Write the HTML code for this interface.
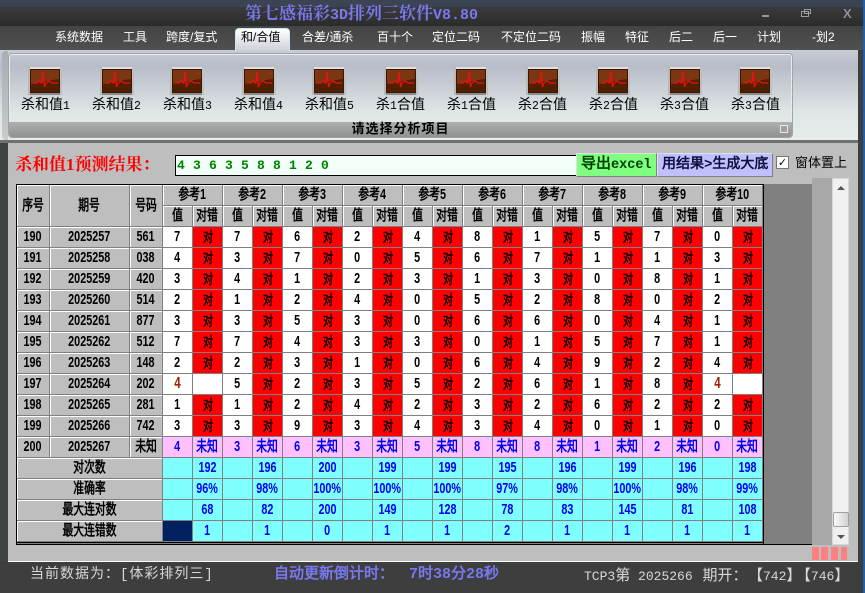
<!DOCTYPE html>
<html><head><meta charset="utf-8">
<style>
*{margin:0;padding:0;box-sizing:border-box}
html,body{width:865px;height:593px;overflow:hidden;background:#bebebe}
body{position:relative;font-family:"Liberation Sans","WenQuanYi Zen Hei","Noto Sans CJK SC",sans-serif}
.a{position:absolute}
.m{position:absolute;top:29px;height:16px;line-height:16px;font-size:12px;color:#fff;white-space:nowrap}
.ic{position:absolute;top:67px;width:34px;height:28px}
.l{position:absolute;top:95px;width:71px;text-align:center;font-size:14px;line-height:18px;color:#000;white-space:nowrap}
.l i{font:normal 11.5px "Liberation Mono",monospace}
table{border-collapse:separate;border-spacing:0;table-layout:fixed;width:746px}
td{height:21px;padding:0;text-align:center;vertical-align:middle;border-right:1px solid #808080;border-bottom:1px solid #808080;font:bold 15px/18px "Liberation Sans","WenQuanYi Zen Hei",sans-serif;color:#000;background:#fff;overflow:hidden;white-space:nowrap}
td b{display:inline-block;margin:0 -20px;transform:scaleX(.72)}
td.g{background:#bebebe;box-shadow:inset 1px 1px 0 #fff}
tr.d td:nth-child(odd):not(.g):not(.w){background:#f00;font-size:14px}
tr.p td{background:#ffc0ff;color:#0000f0}
tr.p td.g{background:#bebebe;color:#000}
tr.s td{background:#80ffff;color:#0000f0}
tr.s td.g{background:#bebebe;color:#000}
tr.s td.n{background:#002060}
td.r{color:#a02000;font-size:16px}
.c{font-size:15px;font-family:"WenQuanYi Zen Hei","Noto Sans CJK SC",sans-serif}
</style></head><body>
<svg width="0" height="0" style="position:absolute"><defs>
<symbol id="h" viewBox="0 0 34 28">
<rect width="34" height="28" fill="#8c8c8c"/><rect x="0" y="0" width="34" height="2" fill="#e0e0e0"/><rect x="0" y="0" width="2" height="28" fill="#b8b8b8"/><rect x="32" y="0" width="2" height="28" fill="#c0c0c0"/>
<rect x="2" y="2" width="30" height="24" fill="#3a1808"/><path d="M3 3H31V12L3 17Z" fill="#7c3612"/><path d="M3 17L31 12V25H3Z" fill="#511f02"/>
<path d="M5 16H9L12 14 13 16H14L15 5 16.5 20 18 16 21 14 24 16H30" fill="none" stroke="#ee1010" stroke-width="1.2"/>
</symbol></defs></svg>

<div class="a" style="left:0;top:0;width:865px;height:7px;background:#3b4452"></div>
<div class="a" style="left:0;top:7px;width:865px;height:19px;background:linear-gradient(#3a3a3a,#2c2c2c)"></div>
<div class="a" style="left:0;top:26px;width:865px;height:25px;background:linear-gradient(#444,#505050)"></div>
<div class="a" style="left:245px;top:6px;height:20px;line-height:20px;font-size:17px;font-weight:bold;color:#7878f0;font-family:'Liberation Mono','Noto Serif CJK SC',serif;white-space:nowrap">第七感福彩<span style="font-size:15px">3D</span>排列三软件<span style="font-size:15px">V8.80</span></div>
<div class="a" style="left:762px;top:15px;width:7px;height:2px;background:#9a9a9a"></div>
<div class="a" style="left:801px;top:11px;width:8px;height:6px;border:1px solid #9aa0a8"></div>
<div class="a" style="left:804px;top:9px;width:7px;height:5px;border:1px solid #9aa0a8"></div>
<div class="a" style="left:843px;top:5px;font:bold 13px/18px 'Liberation Sans',sans-serif;color:#8a929a">X</div>

<div class="a" style="left:0;top:50px;width:865px;height:90px;background:linear-gradient(#c8ccd6,#b8bcc8 18%,#e0e6e6 70%,#e6ecec)"></div>
<div class="a" style="left:235px;top:28px;width:55px;height:23px;background:linear-gradient(#fff,#ccd0d8);border-radius:4px 4px 0 0;border:1px solid #c8e8f0;border-bottom:0"></div>
<span class="m" style="left:55px">系统数据</span><span class="m" style="left:123px">工具</span><span class="m" style="left:166px">跨度/复式</span><span class="m" style="left:241px;color:#000">和/合值</span><span class="m" style="left:302px">合差/通杀</span><span class="m" style="left:377px">百十个</span><span class="m" style="left:432px">定位二码</span><span class="m" style="left:501px">不定位二码</span><span class="m" style="left:581px">振幅</span><span class="m" style="left:625px">特征</span><span class="m" style="left:669px">后二</span><span class="m" style="left:713px">后一</span><span class="m" style="left:757px">计划</span><span class="m" style="left:812px">-划2</span>

<div class="a" style="left:2px;top:51px;width:6px;height:89px;background:linear-gradient(#a8acb4,#c8cccc);border-radius:4px 0 0 4px"></div>
<div class="a" style="left:8px;top:53px;width:785px;height:85px;border:1px solid #a0a4a8;border-radius:4px;box-shadow:inset 0 0 0 1px #e8ecee"></div>
<div class="a" style="left:9px;top:122px;width:783px;height:15px;background:linear-gradient(#aeb0b0,#909292);border-radius:0 0 3px 3px"></div>
<div class="a" style="left:9px;top:119px;width:783px;text-align:center;font:bold 13px/17px 'WenQuanYi Zen Hei','Noto Sans CJK SC',sans-serif;color:#000;letter-spacing:1px;white-space:nowrap">请选择分析项目</div>
<div class="a" style="left:780px;top:125px;width:8px;height:8px;border:1px solid #e8e8e8;background:#a0a0a0"></div>

<svg class="ic" style="left:28px"><use href="#h"/></svg><svg class="ic" style="left:100px"><use href="#h"/></svg><svg class="ic" style="left:170px"><use href="#h"/></svg><svg class="ic" style="left:242px"><use href="#h"/></svg><svg class="ic" style="left:312px"><use href="#h"/></svg><svg class="ic" style="left:384px"><use href="#h"/></svg><svg class="ic" style="left:454px"><use href="#h"/></svg><svg class="ic" style="left:526px"><use href="#h"/></svg><svg class="ic" style="left:596px"><use href="#h"/></svg><svg class="ic" style="left:668px"><use href="#h"/></svg><svg class="ic" style="left:738px"><use href="#h"/></svg>
<span class="l" style="left:10px">杀和值<i>1</i></span><span class="l" style="left:81px">杀和值<i>2</i></span><span class="l" style="left:152px">杀和值<i>3</i></span><span class="l" style="left:223px">杀和值<i>4</i></span><span class="l" style="left:294px">杀和值<i>5</i></span><span class="l" style="left:365px">杀<i>1</i>合值</span><span class="l" style="left:436px">杀<i>1</i>合值</span><span class="l" style="left:507px">杀<i>2</i>合值</span><span class="l" style="left:578px">杀<i>2</i>合值</span><span class="l" style="left:649px">杀<i>3</i>合值</span><span class="l" style="left:720px">杀<i>3</i>合值</span>

<div class="a" style="left:0;top:140px;width:860px;height:3px;background:#707070"></div>
<div class="a" style="left:0;top:143px;width:8px;height:418px;background:#3c4444"></div>
<div class="a" style="left:8px;top:143px;width:850px;height:418px;background:#bebebe"></div>
<div class="a" style="left:858px;top:50px;width:5px;height:543px;background:#3e3e3e"></div>
<div class="a" style="left:863px;top:0;width:2px;height:593px;background:#1c60b0"></div>

<div class="a" style="left:15px;top:154px;font:bold 17px/22px 'Liberation Serif','Noto Serif CJK SC',serif;color:#f00;white-space:nowrap">杀和值1预测结果：</div>
<div class="a" style="left:175px;top:155px;width:402px;height:21px;border:1px solid #000;background:#f2fff8;font:bold 13px/19px 'Liberation Mono',monospace;color:#008000;padding-left:1px;word-spacing:.4px">4 3 6 3 5 8 8 1 2 0</div>
<div class="a" style="left:576px;top:153px;width:81px;height:24px;background:#80ff80;border:1px solid #e0e0e0;border-right-color:#808080;border-bottom-color:#808080;font:bold 15px/22px 'Liberation Mono','WenQuanYi Zen Hei',monospace;color:#004000;white-space:nowrap;padding-left:4px">导出<span style="font-size:13.5px">excel</span></div>
<div class="a" style="left:657px;top:153px;width:116px;height:24px;background:#c0c0ff;border:1px solid #e0e0e0;border-right-color:#808080;border-bottom-color:#808080;font:bold 14px/22px 'Liberation Mono','WenQuanYi Zen Hei',monospace;color:#101040;white-space:nowrap;padding-left:4px">用结果&gt;生成大底</div>
<div class="a" style="left:776px;top:156px;width:13px;height:13px;background:#fff;border:1px solid #777;font:bold 11px/11px 'DejaVu Sans',sans-serif;color:#000;text-align:center">✓</div>
<div class="a" style="left:795px;top:155px;font-size:13px;line-height:16px;color:#000;white-space:nowrap">窗体置上</div>

<div class="a" style="left:763px;top:184px;width:50px;height:361px;background:#808080"></div>
<div class="a" style="left:812px;top:178px;width:20px;height:367px;background:#a8a8a8"></div>
<div class="a" style="left:832px;top:178px;width:17px;height:367px;background:#f0f0f0;border:1px solid #d8d8d8"></div>
<div class="a" style="left:837px;top:186px;width:0;height:0;border:4px solid transparent;border-bottom:4px solid #555;border-top:0"></div>
<div class="a" style="left:837px;top:535px;width:0;height:0;border:4px solid transparent;border-top:4px solid #555;border-bottom:0"></div>
<div class="a" style="left:833px;top:512px;width:16px;height:15px;background:linear-gradient(90deg,#fafafa,#d0d0d0);border:1px solid #a0a0a0;border-radius:2px"></div>
<div class="a" style="left:812px;top:547px;width:7px;height:13px;background:#ff8080"></div><div class="a" style="left:821px;top:547px;width:7px;height:13px;background:#ff8080"></div><div class="a" style="left:831px;top:547px;width:7px;height:13px;background:#ff8080"></div><div class="a" style="left:841px;top:547px;width:6px;height:13px;background:#ff8080"></div>

<div class="a" style="left:16px;top:184px;width:748px;height:361px;border:1px solid #000;border-bottom:0;background:#808080"></div>
<div class="a" style="left:16px;top:542px;width:748px;height:1px;background:#000"></div>
<div class="a" style="left:16px;top:544px;width:796px;height:1px;background:#000"></div>
<div class="a" style="left:17px;top:185px">
<table>
<colgroup><col style="width:33px"><col style="width:80px"><col style="width:33px"><col span="20" style="width:30px"></colgroup>
<tr><td class="g" rowspan="2"><b>序号</b></td><td class="g" rowspan="2"><b>期号</b></td><td class="g" rowspan="2"><b>号码</b></td><td class="g" colspan="2"><b>参考1</b></td><td class="g" colspan="2"><b>参考2</b></td><td class="g" colspan="2"><b>参考3</b></td><td class="g" colspan="2"><b>参考4</b></td><td class="g" colspan="2"><b>参考5</b></td><td class="g" colspan="2"><b>参考6</b></td><td class="g" colspan="2"><b>参考7</b></td><td class="g" colspan="2"><b>参考8</b></td><td class="g" colspan="2"><b>参考9</b></td><td class="g" colspan="2"><b>参考10</b></td></tr>
<tr><td class="g"><b>值</b></td><td class="g"><b>对错</b></td><td class="g"><b>值</b></td><td class="g"><b>对错</b></td><td class="g"><b>值</b></td><td class="g"><b>对错</b></td><td class="g"><b>值</b></td><td class="g"><b>对错</b></td><td class="g"><b>值</b></td><td class="g"><b>对错</b></td><td class="g"><b>值</b></td><td class="g"><b>对错</b></td><td class="g"><b>值</b></td><td class="g"><b>对错</b></td><td class="g"><b>值</b></td><td class="g"><b>对错</b></td><td class="g"><b>值</b></td><td class="g"><b>对错</b></td><td class="g"><b>值</b></td><td class="g"><b>对错</b></td></tr>
<tr class="d"><td class="g"><b>190</b></td><td class="g"><b>2025257</b></td><td class="g"><b>561</b></td><td><b>7</b></td><td><b>对</b></td><td><b>7</b></td><td><b>对</b></td><td><b>6</b></td><td><b>对</b></td><td><b>2</b></td><td><b>对</b></td><td><b>4</b></td><td><b>对</b></td><td><b>8</b></td><td><b>对</b></td><td><b>1</b></td><td><b>对</b></td><td><b>5</b></td><td><b>对</b></td><td><b>7</b></td><td><b>对</b></td><td><b>0</b></td><td><b>对</b></td></tr>
<tr class="d"><td class="g"><b>191</b></td><td class="g"><b>2025258</b></td><td class="g"><b>038</b></td><td><b>4</b></td><td><b>对</b></td><td><b>3</b></td><td><b>对</b></td><td><b>7</b></td><td><b>对</b></td><td><b>0</b></td><td><b>对</b></td><td><b>5</b></td><td><b>对</b></td><td><b>6</b></td><td><b>对</b></td><td><b>7</b></td><td><b>对</b></td><td><b>1</b></td><td><b>对</b></td><td><b>1</b></td><td><b>对</b></td><td><b>3</b></td><td><b>对</b></td></tr>
<tr class="d"><td class="g"><b>192</b></td><td class="g"><b>2025259</b></td><td class="g"><b>420</b></td><td><b>3</b></td><td><b>对</b></td><td><b>4</b></td><td><b>对</b></td><td><b>1</b></td><td><b>对</b></td><td><b>2</b></td><td><b>对</b></td><td><b>3</b></td><td><b>对</b></td><td><b>1</b></td><td><b>对</b></td><td><b>3</b></td><td><b>对</b></td><td><b>0</b></td><td><b>对</b></td><td><b>8</b></td><td><b>对</b></td><td><b>1</b></td><td><b>对</b></td></tr>
<tr class="d"><td class="g"><b>193</b></td><td class="g"><b>2025260</b></td><td class="g"><b>514</b></td><td><b>2</b></td><td><b>对</b></td><td><b>1</b></td><td><b>对</b></td><td><b>2</b></td><td><b>对</b></td><td><b>4</b></td><td><b>对</b></td><td><b>0</b></td><td><b>对</b></td><td><b>5</b></td><td><b>对</b></td><td><b>2</b></td><td><b>对</b></td><td><b>8</b></td><td><b>对</b></td><td><b>0</b></td><td><b>对</b></td><td><b>2</b></td><td><b>对</b></td></tr>
<tr class="d"><td class="g"><b>194</b></td><td class="g"><b>2025261</b></td><td class="g"><b>877</b></td><td><b>3</b></td><td><b>对</b></td><td><b>3</b></td><td><b>对</b></td><td><b>5</b></td><td><b>对</b></td><td><b>3</b></td><td><b>对</b></td><td><b>0</b></td><td><b>对</b></td><td><b>6</b></td><td><b>对</b></td><td><b>6</b></td><td><b>对</b></td><td><b>0</b></td><td><b>对</b></td><td><b>4</b></td><td><b>对</b></td><td><b>1</b></td><td><b>对</b></td></tr>
<tr class="d"><td class="g"><b>195</b></td><td class="g"><b>2025262</b></td><td class="g"><b>512</b></td><td><b>7</b></td><td><b>对</b></td><td><b>7</b></td><td><b>对</b></td><td><b>4</b></td><td><b>对</b></td><td><b>3</b></td><td><b>对</b></td><td><b>3</b></td><td><b>对</b></td><td><b>0</b></td><td><b>对</b></td><td><b>1</b></td><td><b>对</b></td><td><b>5</b></td><td><b>对</b></td><td><b>7</b></td><td><b>对</b></td><td><b>1</b></td><td><b>对</b></td></tr>
<tr class="d"><td class="g"><b>196</b></td><td class="g"><b>2025263</b></td><td class="g"><b>148</b></td><td><b>2</b></td><td><b>对</b></td><td><b>2</b></td><td><b>对</b></td><td><b>3</b></td><td><b>对</b></td><td><b>1</b></td><td><b>对</b></td><td><b>0</b></td><td><b>对</b></td><td><b>6</b></td><td><b>对</b></td><td><b>4</b></td><td><b>对</b></td><td><b>9</b></td><td><b>对</b></td><td><b>2</b></td><td><b>对</b></td><td><b>4</b></td><td><b>对</b></td></tr>
<tr class="d"><td class="g"><b>197</b></td><td class="g"><b>2025264</b></td><td class="g"><b>202</b></td><td class="r"><b>4</b></td><td class="w"></td><td><b>5</b></td><td><b>对</b></td><td><b>2</b></td><td><b>对</b></td><td><b>3</b></td><td><b>对</b></td><td><b>5</b></td><td><b>对</b></td><td><b>2</b></td><td><b>对</b></td><td><b>6</b></td><td><b>对</b></td><td><b>1</b></td><td><b>对</b></td><td><b>8</b></td><td><b>对</b></td><td class="r"><b>4</b></td><td class="w"></td></tr>
<tr class="d"><td class="g"><b>198</b></td><td class="g"><b>2025265</b></td><td class="g"><b>281</b></td><td><b>1</b></td><td><b>对</b></td><td><b>1</b></td><td><b>对</b></td><td><b>2</b></td><td><b>对</b></td><td><b>4</b></td><td><b>对</b></td><td><b>2</b></td><td><b>对</b></td><td><b>3</b></td><td><b>对</b></td><td><b>2</b></td><td><b>对</b></td><td><b>6</b></td><td><b>对</b></td><td><b>2</b></td><td><b>对</b></td><td><b>2</b></td><td><b>对</b></td></tr>
<tr class="d"><td class="g"><b>199</b></td><td class="g"><b>2025266</b></td><td class="g"><b>742</b></td><td><b>3</b></td><td><b>对</b></td><td><b>3</b></td><td><b>对</b></td><td><b>9</b></td><td><b>对</b></td><td><b>3</b></td><td><b>对</b></td><td><b>4</b></td><td><b>对</b></td><td><b>3</b></td><td><b>对</b></td><td><b>4</b></td><td><b>对</b></td><td><b>0</b></td><td><b>对</b></td><td><b>1</b></td><td><b>对</b></td><td><b>0</b></td><td><b>对</b></td></tr>
<tr class="p"><td class="g"><b>200</b></td><td class="g"><b>2025267</b></td><td class="g"><b>未知</b></td><td><b>4</b></td><td><b>未知</b></td><td><b>3</b></td><td><b>未知</b></td><td><b>6</b></td><td><b>未知</b></td><td><b>3</b></td><td><b>未知</b></td><td><b>5</b></td><td><b>未知</b></td><td><b>8</b></td><td><b>未知</b></td><td><b>8</b></td><td><b>未知</b></td><td><b>1</b></td><td><b>未知</b></td><td><b>2</b></td><td><b>未知</b></td><td><b>0</b></td><td><b>未知</b></td></tr>
<tr class="s"><td class="g" colspan="3"><b>对次数</b></td><td></td><td><b>192</b></td><td></td><td><b>196</b></td><td></td><td><b>200</b></td><td></td><td><b>199</b></td><td></td><td><b>199</b></td><td></td><td><b>195</b></td><td></td><td><b>196</b></td><td></td><td><b>199</b></td><td></td><td><b>196</b></td><td></td><td><b>198</b></td></tr>
<tr class="s"><td class="g" colspan="3"><b>准确率</b></td><td></td><td><b>96%</b></td><td></td><td><b>98%</b></td><td></td><td><b>100%</b></td><td></td><td><b>100%</b></td><td></td><td><b>100%</b></td><td></td><td><b>97%</b></td><td></td><td><b>98%</b></td><td></td><td><b>100%</b></td><td></td><td><b>98%</b></td><td></td><td><b>99%</b></td></tr>
<tr class="s"><td class="g" colspan="3"><b>最大连对数</b></td><td></td><td><b>68</b></td><td></td><td><b>82</b></td><td></td><td><b>200</b></td><td></td><td><b>149</b></td><td></td><td><b>128</b></td><td></td><td><b>78</b></td><td></td><td><b>83</b></td><td></td><td><b>145</b></td><td></td><td><b>81</b></td><td></td><td><b>108</b></td></tr>
<tr class="s"><td class="g" colspan="3"><b>最大连错数</b></td><td class="n"></td><td><b>1</b></td><td></td><td><b>1</b></td><td></td><td><b>0</b></td><td></td><td><b>1</b></td><td></td><td><b>1</b></td><td></td><td><b>2</b></td><td></td><td><b>1</b></td><td></td><td><b>1</b></td><td></td><td><b>1</b></td><td></td><td><b>1</b></td></tr>
</table>
</div>

<div class="a" style="left:8px;top:561px;width:850px;height:1px;background:#fff"></div>
<div class="a" style="left:0;top:562px;width:863px;height:31px;background:#3e3e3e"></div>
<div class="a" style="left:0;top:561px;width:8px;height:1px;background:#3e3e3e"></div>
<div class="a" style="left:30px;top:566px;font:14px/18px 'Liberation Mono','WenQuanYi Zen Hei',monospace;color:#d8d8d8;white-space:nowrap;letter-spacing:1px">当前数据为：[体彩排列三]</div>
<div class="a" style="left:274px;top:566px;font:bold 15px/18px 'Liberation Mono','WenQuanYi Zen Hei',monospace;color:#7878f0;white-space:nowrap;word-spacing:6px">自动更新倒计时： 7时38分28秒</div>
<div class="a" style="left:584px;top:566px;font:13px/18px 'Liberation Mono',monospace;color:#d8d8d8;white-space:nowrap">TCP3<span class="c">第</span> 2025266 <span class="c" style="margin-left:2px">期开：</span><span class="c" style="margin-left:8px">【</span>742<span class="c">】</span><span class="c" style="margin-left:2px">【</span>746<span class="c">】</span></div>
</body></html>
